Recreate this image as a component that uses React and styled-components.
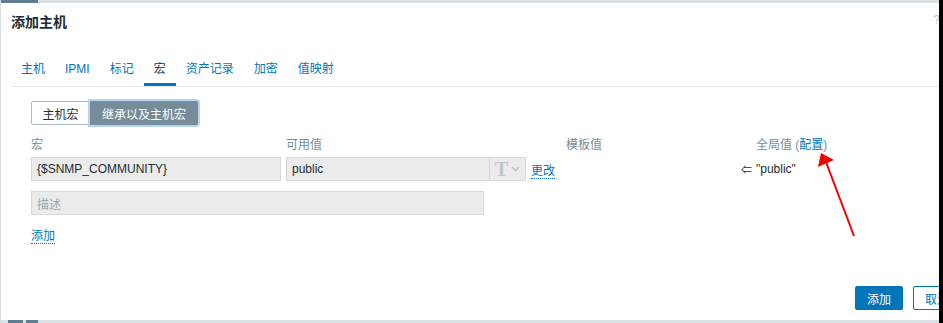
import React from 'react';
import styled, { createGlobalStyle } from 'styled-components';

const GlobalStyle = createGlobalStyle`
  html, body {
    margin: 0;
    padding: 0;
    background: #ffffff;
  }
  body {
    font-family: "Liberation Sans", Arial, "Noto Sans CJK SC", sans-serif;
    font-size: 12px;
    color: #1f2c33;
  }
`;

const Screen = styled.div`
  width: 943px;
  height: 323px;
  display: flex;
  overflow: hidden;
  position: relative;
`;

const Dialog = styled.div`
  flex: 1;
  display: flex;
  flex-direction: column;
  border-left: 1px solid #d5dde1;
  background: #fff;
`;

const EdgeStrip = styled.div`
  height: 3px;
  display: flex;
  background: #d9e1e5;
  flex-shrink: 0;
`;

const EdgeSeg = styled.div`
  width: ${(p) => p.w}px;
  margin-left: ${(p) => p.ml || 0}px;
  background: ${(p) => p.c || '#5e7d8f'};
`;

const BlackEdge = styled.div`
  width: 4px;
  background: #000;
`;

const Header = styled.div`
  display: flex;
  justify-content: space-between;
  padding: 10px 0 0 10px;
  height: 41px;
`;

const Title = styled.h4`
  margin: 0;
  font-size: 14px;
  line-height: 18px;
  font-weight: bold;
  color: #1f2c33;
`;

const Help = styled.span`
  color: #b6c2c8;
  font-size: 12px;
  line-height: 12px;
  margin-top: 1px;
  margin-right: -1px;
`;

const TabBar = styled.div`
  display: flex;
  margin-left: 10px;
  border-bottom: 1px solid #e2e7ea;
`;

const Tab = styled.div`
  padding: 8px 10px 7px;
  line-height: 14px;
  color: ${(p) => (p.active ? '#1f2c33' : '#0275b8')};
  border-bottom: 3px solid ${(p) => (p.active ? '#0275b8' : 'transparent')};
`;

const Body = styled.div`
  padding: 14px 0 0 30px;
  position: relative;
  flex: 1;
`;

const Segmented = styled.div`
  display: flex;
  height: 24px;
`;

const SegButton = styled.div`
  box-sizing: border-box;
  height: 24px;
  width: ${(p) => p.w}px;
  display: flex;
  align-items: center;
  justify-content: center;
  border: 1px solid ${(p) => (p.active ? '#768d99' : '#acbbc2')};
  border-radius: ${(p) => (p.active ? '0 2px 2px 0' : '2px 0 0 2px')};
  background: ${(p) => (p.active ? '#768d99' : '#fff')};
  color: ${(p) => (p.active ? '#fff' : '#1f2c33')};
  box-shadow: ${(p) => (p.active ? '0 0 0 2px #b7d4ee' : 'none')};
`;

const MacroGrid = styled.div`
  display: grid;
  grid-template-columns: 250px 240px 30px 170px 10px 150px;
  column-gap: 5px;
  margin-top: 13px;
  row-gap: 5px;
  align-items: center;
`;

const ColHead = styled.div`
  color: #768d99;
  line-height: 14px;
  white-space: nowrap;
`;

const Link = styled.span`
  color: #0275b8;
  border-bottom: ${(p) => (p.dotted ? '1px dotted #0275b8' : 'none')};
`;

const Field = styled.div`
  box-sizing: border-box;
  height: 24px;
  width: ${(p) => p.w || 'auto'};
  display: flex;
  align-items: center;
  background: #ebebeb;
  border: 1px solid #d3d9dc;
  color: ${(p) => (p.placeholder ? '#9aa7ad' : '#1f2c33')};
  padding-left: 5px;
`;

const FieldText = styled.span`
  flex: 1;
`;

const TypeSelect = styled.div`
  width: 35px;
  height: 22px;
  border-left: 1px solid #d3d9dc;
  display: flex;
  align-items: center;
  justify-content: center;
  gap: 3px;
`;

const TypeGlyph = styled.span`
  font-family: "Liberation Serif", "Times New Roman", serif;
  font-size: 20px;
  font-weight: bold;
  color: #bcc8ce;
  line-height: 20px;
`;

const GlobalValue = styled.div`
  white-space: nowrap;
  color: #1f2c33;
`;

const Arrow = styled.span`
  font-size: 11px;
  color: #1f2c33;
`;

const DescRow = styled.div`
  margin-top: 10px;
`;

const AddRow = styled.div`
  margin-top: 14px;
  line-height: 14px;
`;

const Footer = styled.div`
  display: flex;
  justify-content: flex-end;
  gap: 10px;
  padding-bottom: 10px;
  margin-right: -22px;
`;

const Button = styled.div`
  box-sizing: border-box;
  height: 24px;
  width: 48px;
  display: flex;
  align-items: center;
  justify-content: center;
  border-radius: 2px;
  border: 1px solid #0275b8;
  background: ${(p) => (p.primary ? '#0275b8' : '#fff')};
  color: ${(p) => (p.primary ? '#fff' : '#0275b8')};
`;

const Annotation = styled.svg`
  position: absolute;
  left: 0;
  top: 0;
  pointer-events: none;
`;

const tabs = ['主机', 'IPMI', '标记', '宏', '资产记录', '加密', '值映射'];

export default function App() {
  return (
    <>
      <GlobalStyle />
      <Screen>
        <Dialog>
          <EdgeStrip>
            <EdgeSeg w={37} />
          </EdgeStrip>
          <Header>
            <Title>添加主机</Title>
            <Help>?</Help>
          </Header>
          <TabBar>
            {tabs.map((t) => (
              <Tab key={t} active={t === '宏'}>
                {t}
              </Tab>
            ))}
          </TabBar>
          <Body>
            <Segmented>
              <SegButton w={59}>主机宏</SegButton>
              <SegButton w={108} active>
                继承以及主机宏
              </SegButton>
            </Segmented>
            <MacroGrid>
              <ColHead>宏</ColHead>
              <ColHead>可用值</ColHead>
              <ColHead />
              <ColHead>模板值</ColHead>
              <ColHead />
              <ColHead>
                全局值 (<Link>配置</Link>)
              </ColHead>

              <Field>
                <FieldText>{'{$SNMP_COMMUNITY}'}</FieldText>
              </Field>
              <Field>
                <FieldText>public</FieldText>
                <TypeSelect>
                  <TypeGlyph>T</TypeGlyph>
                  <svg width="9" height="6" viewBox="0 0 9 6">
                    <path d="M1 1l3.5 3.5L8 1" fill="none" stroke="#b6c2c8" strokeWidth="1.3" />
                  </svg>
                </TypeSelect>
              </Field>
              <div>
                <Link dotted>更改</Link>
              </div>
              <div />
              <Arrow>⇐</Arrow>
              <GlobalValue>"public"</GlobalValue>
            </MacroGrid>
            <DescRow>
              <Field w="453px" placeholder>
                描述
              </Field>
            </DescRow>
            <AddRow>
              <Link dotted>添加</Link>
            </AddRow>
          </Body>
          <Footer>
            <Button primary>添加</Button>
            <Button>取消</Button>
          </Footer>
          <EdgeStrip>
            <EdgeSeg w={15} ml={7} />
            <EdgeSeg w={12} ml={3} />
          </EdgeStrip>
        </Dialog>
        <BlackEdge />
        <Annotation width="943" height="323" viewBox="0 0 943 323">
          <line x1="854" y1="236" x2="826" y2="162" stroke="#f00000" strokeWidth="2" />
          <polygon points="821,153 818,167 834,160" fill="#f00000" />
        </Annotation>
      </Screen>
    </>
  );
}
